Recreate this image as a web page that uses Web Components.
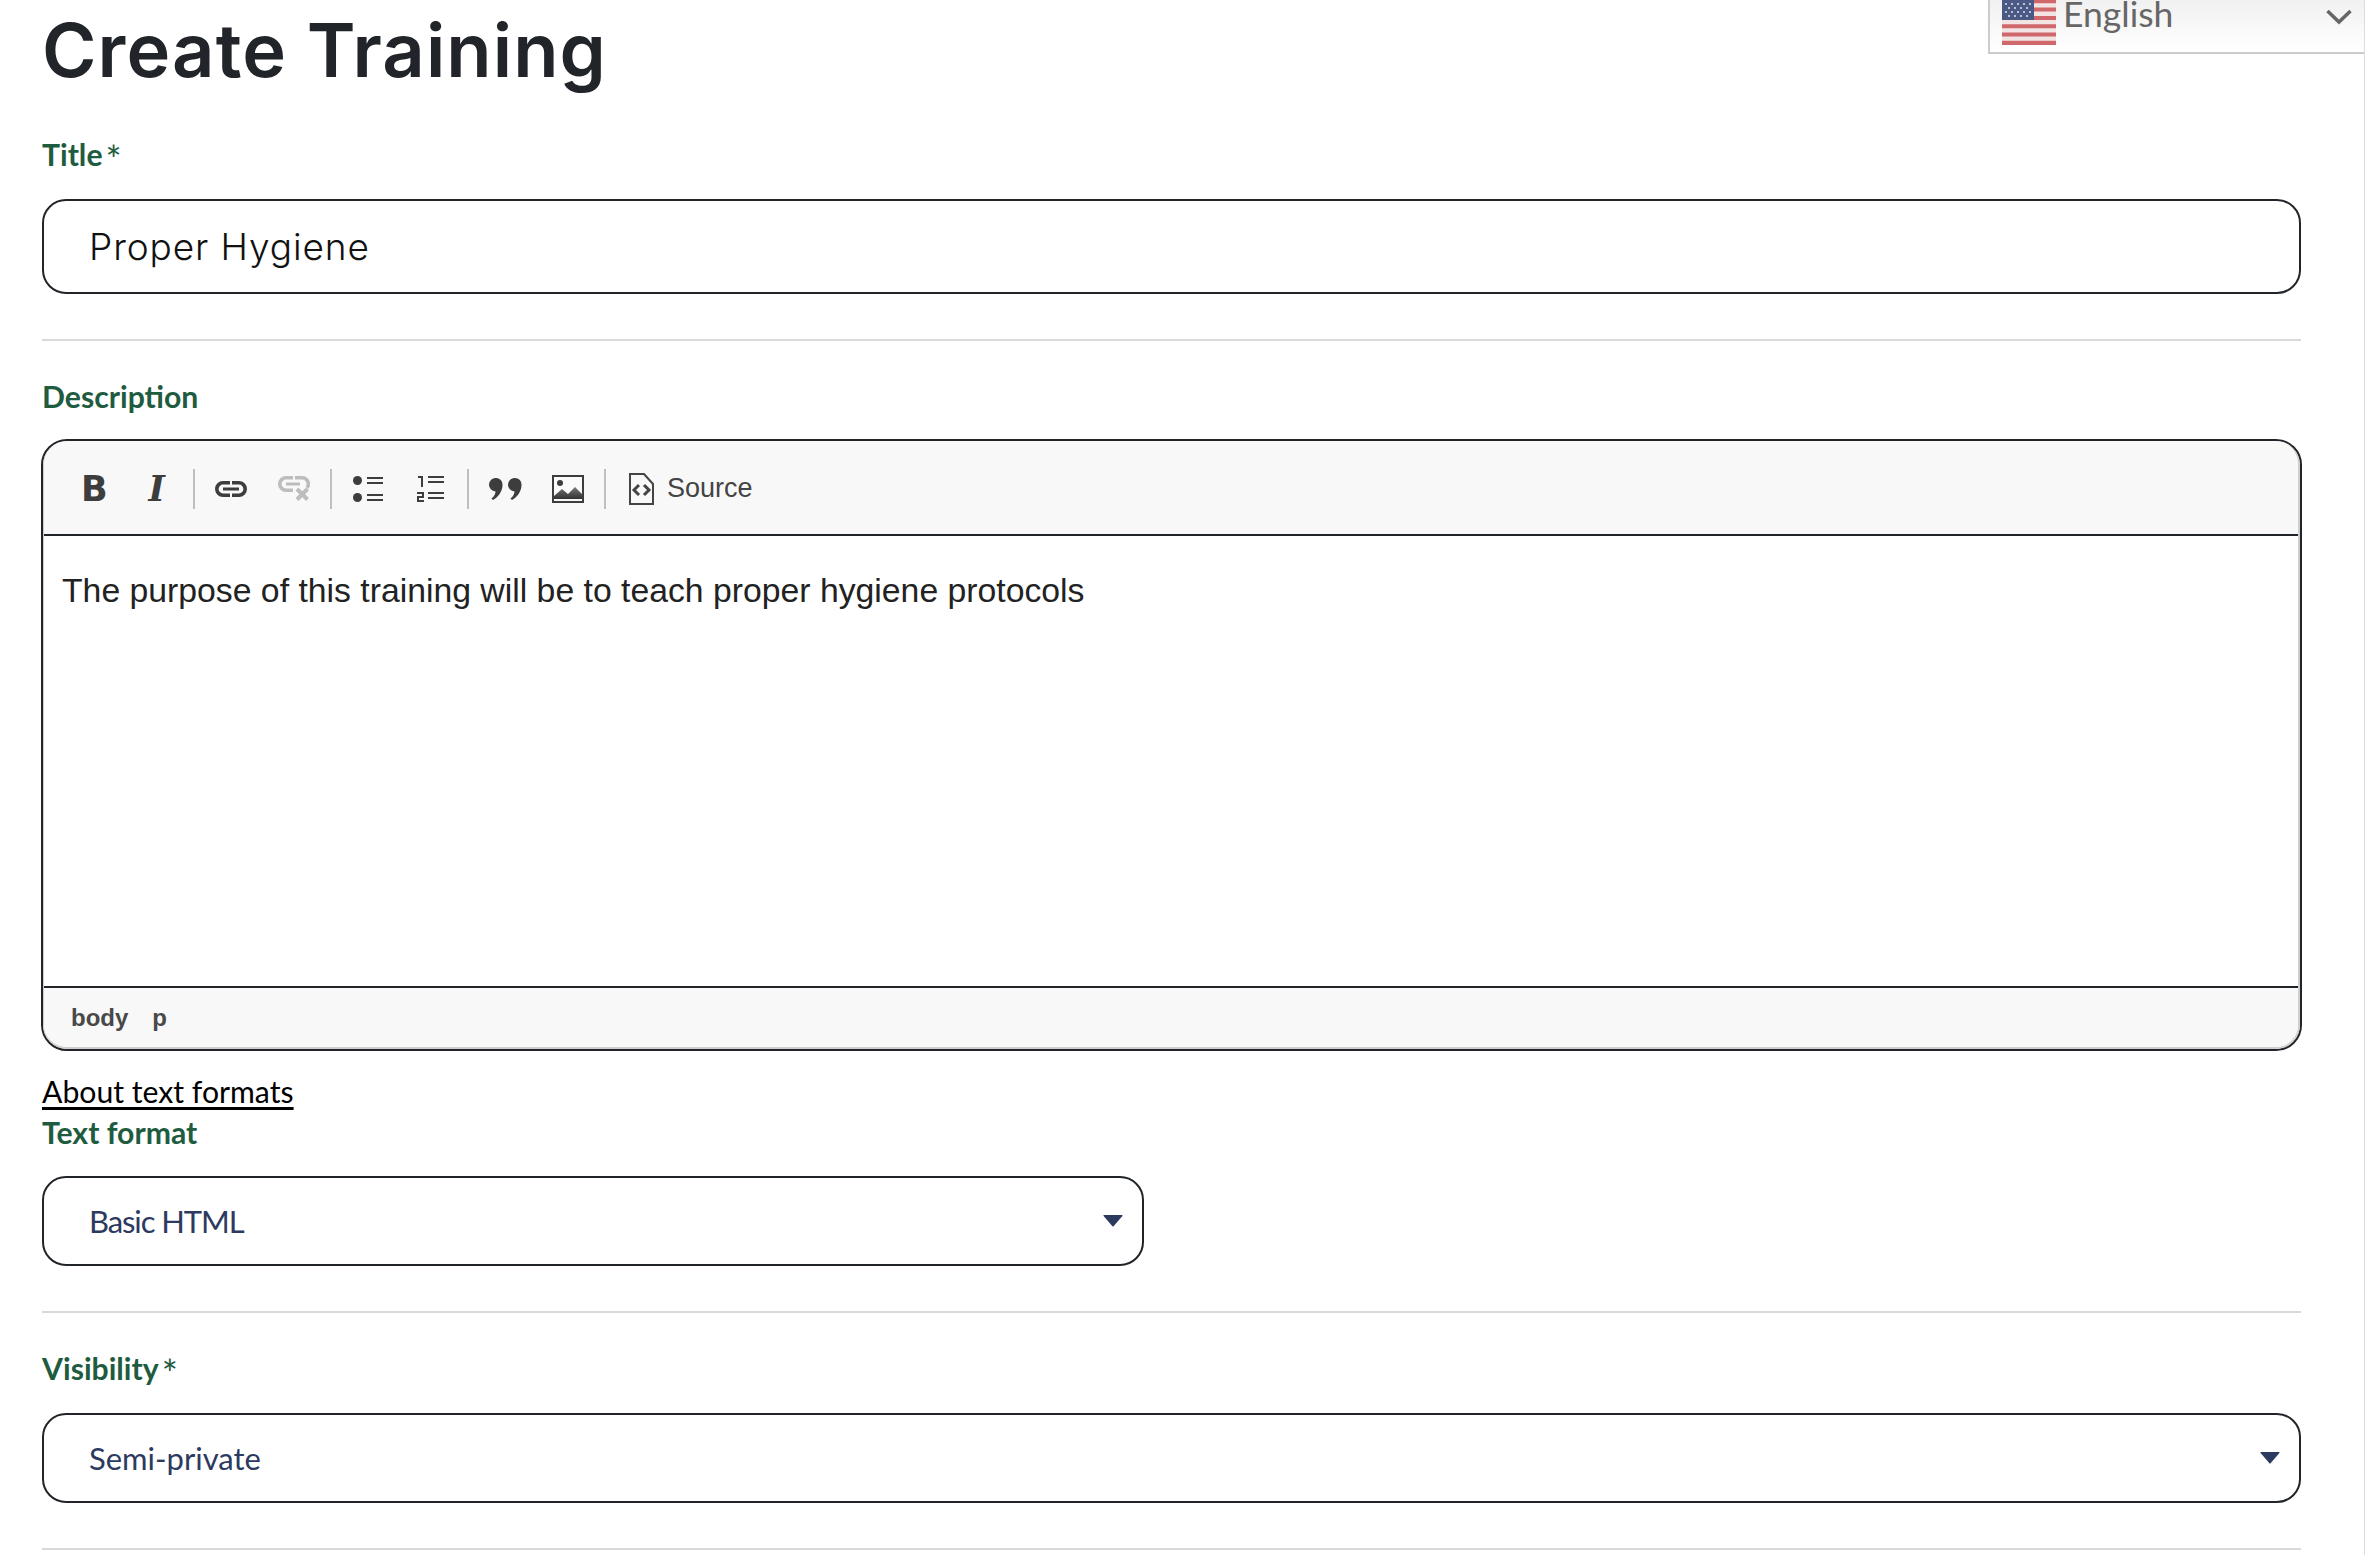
<!DOCTYPE html>
<html lang="en">
<head>
<meta charset="utf-8">
<title>Create Training</title>
<style>
  html, body { margin: 0; padding: 0; background: #fff; }
  body { height: 1555px; overflow: hidden; font-family: "Lato", "Liberation Sans", sans-serif; }
</style>
</head>
<body>
<training-page>
  <lang-switcher slot="overlay">English</lang-switcher>
  <page-title>Create Training</page-title>

  <form-label required style="margin-top:6px">Title</form-label>
  <text-box style="margin-top:25px">Proper Hygiene</text-box>
  <form-rule style="margin-bottom:35px"></form-rule>

  <form-label>Description</form-label>
  <rich-editor style="margin-top:23px">The purpose of this training will be to teach proper hygiene protocols</rich-editor>
  <format-link>About text formats</format-link>
  <form-label style="margin-top:1px">Text format</form-label>
  <select-box style="margin-top:24px;width:1102px;letter-spacing:-1.1px">Basic HTML</select-box>
  <form-rule style="margin-bottom:35px"></form-rule>

  <form-label required>Visibility</form-label>
  <select-box style="margin-top:25px">Semi-private</select-box>
  <form-rule></form-rule>
</training-page>

<script>
class TrainingPage extends HTMLElement {
  constructor() {
    super();
    this.attachShadow({ mode: 'open' }).innerHTML = `
      <style>
        :host { display: block; position: relative; height: 1555px; box-sizing: border-box; padding: 0 64px 0 42px; overflow: hidden; }
        .edge { position: absolute; top: 0; right: 0; bottom: 0; width: 1px; background: #ddd; }
      </style>
      <slot></slot>
      <slot name="overlay"></slot>
      <div class="edge"></div>
    `;
  }
}

class PageTitle extends HTMLElement {
  constructor() {
    super();
    this.attachShadow({ mode: 'open' }).innerHTML = `
      <style>
        :host { display: block; height: 128px; font: 600 74px/100px "Inter", "Liberation Sans", sans-serif; letter-spacing: 1.1px; color: #212529; }
      </style>
      <slot></slot>
    `;
  }
}

class FormLabel extends HTMLElement {
  constructor() {
    super();
    const star = this.hasAttribute('required') ? '<span class="star">*</span>' : '';
    this.attachShadow({ mode: 'open' }).innerHTML = `
      <style>
        :host { display: block; height: 40px; font: 700 30.2px/40px "Lato", "Liberation Sans", sans-serif; color: #1f5c3f; }
        .star { margin-left: 3px; font-size: 38px; font-weight: 400; line-height: 0; vertical-align: -8px; }
      </style>
      <slot></slot>${star}
    `;
  }
}

class TextBox extends HTMLElement {
  constructor() {
    super();
    this.attachShadow({ mode: 'open' }).innerHTML = `
      <style>
        :host { display: flex; align-items: center; box-sizing: border-box; height: 95px; padding: 0 45px; border: 2px solid #212529; border-radius: 24px; font: 300 37px "Inter", "Liberation Sans", sans-serif; letter-spacing: .9px; color: #111; }
      </style>
      <slot></slot>
    `;
  }
}

class SelectBox extends HTMLElement {
  constructor() {
    super();
    this.attachShadow({ mode: 'open' }).innerHTML = `
      <style>
        :host { display: flex; align-items: center; justify-content: space-between; box-sizing: border-box; height: 90px; padding: 0 19px 0 45px; border: 2px solid #212529; border-radius: 24px; font: 400 31px "Lato", "Liberation Sans", sans-serif; color: #2d3a5f; }
        svg { display: block; }
      </style>
      <span><slot></slot></span>
      <svg width="20" height="12" viewBox="0 0 20 12"><path d="M1 0h18q1 0 .4 1L10.8 11q-.8 1-1.6 0L.6 1Q0 0 1 0z" fill="#2d3a5f"/></svg>
    `;
  }
}

class FormRule extends HTMLElement {
  constructor() {
    super();
    this.attachShadow({ mode: 'open' }).innerHTML = `
      <style>
        :host { display: block; height: 2px; margin: 45px 0 36px; background: #d9d9d9; }
      </style>
    `;
  }
}

class FormatLink extends HTMLElement {
  constructor() {
    super();
    this.attachShadow({ mode: 'open' }).innerHTML = `
      <style>
        :host { display: block; height: 40px; margin-top: 20px; font: 400 30.2px/40px "Lato", "Liberation Sans", sans-serif; color: #000; }
        a { color: inherit; text-decoration: underline; text-decoration-thickness: 3px; text-underline-offset: 4px; }
      </style>
      <a href="#"><slot></slot></a>
    `;
  }
}

class ToolButton extends HTMLElement {
  constructor() {
    super();
    this.attachShadow({ mode: 'open' }).innerHTML = `
      <style>
        :host { display: flex; align-items: center; justify-content: center; flex: none; width: 62.5px; height: 62px; color: #3d3d3d; }
        :host([off]) { color: #bdbdbd; }
        :host([wide]) { width: auto; gap: 13px; padding-left: 18px; font: 400 27px "Liberation Sans", Arial, sans-serif; color: #444; }
      </style>
      <slot></slot>
    `;
  }
}

class ToolSep extends HTMLElement {
  constructor() {
    super();
    this.attachShadow({ mode: 'open' }).innerHTML = `
      <style>
        :host { display: block; flex: none; width: 2px; height: 40px; margin: 0 5px; background: #bfbfbf; }
      </style>
    `;
  }
}

class RichEditor extends HTMLElement {
  constructor() {
    super();
    this.attachShadow({ mode: 'open' }).innerHTML = `
      <style>
        :host { display: block; box-sizing: border-box; height: 612px; margin: 0 -1px; border: 2px solid #212529; border-radius: 26px; overflow: hidden; background: #fff; }
        .wrap { display: flex; flex-direction: column; box-sizing: border-box; height: 100%; border: solid #cfcfcf; border-width: 0 2px 2px 1px; border-radius: 24px; overflow: hidden; }
        .bar { display: flex; align-items: center; flex: none; box-sizing: border-box; height: 95px; padding: 2px 0 0 19px; background: #f8f8f8; border-bottom: 2px solid #212529; }
        .body { flex: 1; box-sizing: border-box; padding: 32px 18px; font: 400 33.75px/44px "Liberation Sans", Arial, sans-serif; color: #222; }
        .path { display: flex; align-items: center; gap: 24px; flex: none; box-sizing: border-box; height: 61px; padding-left: 27px; background: #f8f8f8; border-top: 2px solid #212529; font: 700 24px "Liberation Sans", Arial, sans-serif; color: #484848; }
        svg { display: block; }
        .b { font: 700 35px "DejaVu Sans", sans-serif; }
        .i { font: italic 700 35px "DejaVu Serif", serif; }
      </style>
      <div class="wrap">
      <div class="bar">
        <tool-button><span class="b">B</span></tool-button>
        <tool-button><span class="i">I</span></tool-button>
        <tool-sep></tool-sep>
        <tool-button>
          <svg width="32" height="16" viewBox="0 0 32 16" fill="none" stroke="currentColor" stroke-width="3.6"><path d="M15 1.800H8a6.200 6.200 0 0 0 0 12.400h7M17 1.800h7a6.200 6.200 0 0 1 0 12.400h-7"/><path d="M8 8h16" stroke-width="3"/></svg>
        </tool-button>
        <tool-button off>
          <svg width="32" height="25" viewBox="0 0 32 25" fill="none" stroke="currentColor" stroke-width="3.6"><path d="M15 1.800H8a6.200 6.200 0 0 0 0 12.400h7M17 1.800h7a6.200 6.200 0 0 1 5 10"/><path d="M8 8h14" stroke-width="3"/><path d="M19 13l10.500 10.500M29.500 13L19 23.500" stroke-width="4"/></svg>
        </tool-button>
        <tool-sep></tool-sep>
        <tool-button>
          <svg width="30" height="26" viewBox="0 0 30 26" fill="currentColor"><circle cx="4.500" cy="4.500" r="4.500"/><circle cx="4.500" cy="21.500" r="4.500"/><path d="M14 1h16v2H14zM14 6h16v2H14zM14 18h16v2H14zM14 23h16v2H14z"/></svg>
        </tool-button>
        <tool-button>
          <svg width="27" height="28" viewBox="0 0 27 28" fill="none" stroke="currentColor" stroke-width="2"><path d="M1 2h4v10M0 18h6v4H1v4h6"/><path d="M11 2h16M11 7h16M11 18h16M11 23h16"/></svg>
        </tool-button>
        <tool-sep></tool-sep>
        <tool-button>
          <svg width="33" height="22" viewBox="0 0 33 22" fill="currentColor"><path d="M7 0a6.500 6.500 0 0 1 6.500 7c0 6-4 12-9.500 15l-1.500-1.500c3-2.500 4-5 4-7A6.500 6.500 0 0 1 7 0zM26 0a6.500 6.500 0 0 1 6.500 7c0 6-4 12-9.500 15l-1.500-1.500c3-2.500 4-5 4-7A6.500 6.500 0 0 1 26 0z"/></svg>
        </tool-button>
        <tool-button>
          <svg width="32" height="28" viewBox="0 0 32 28">
            <defs><linearGradient id="hill" x1="0" y1="0" x2="0" y2="1"><stop offset="0" stop-color="#777"/><stop offset="1" stop-color="#333"/></linearGradient></defs>
            <rect x="1" y="1" width="30" height="26" fill="#fafafa" stroke="#3d3d3d" stroke-width="2"/>
            <circle cx="8" cy="8" r="3" fill="#3d3d3d"/>
            <path d="M2 21l8-7 6 5 7-7 7 7v5H2z" fill="url(#hill)"/>
          </svg>
        </tool-button>
        <tool-sep></tool-sep>
        <tool-button wide>
          <svg width="25" height="32" viewBox="0 0 25 32" fill="none" stroke="#444" stroke-width="2"><path d="M1 1h14l9 10v20H1z"/><path d="M10 12l-5 5 5 5M15 12l5 5-5 5" stroke-width="3"/></svg>
          <span>Source</span>
        </tool-button>
      </div>
      <div class="body"><slot></slot></div>
      <div class="path"><span>body</span><span>p</span></div>
      </div>
    `;
  }
}

class LangSwitcher extends HTMLElement {
  constructor() {
    super();
    this.attachShadow({ mode: 'open' }).innerHTML = `
      <style>
        :host { position: absolute; top: 0; left: 1988px; right: 0; height: 54px; box-sizing: border-box; border: solid #ccc; border-width: 0 0 2px 2px; background: linear-gradient(#f1f1f1, #fff); font: 400 35.5px/1 "Lato", "Liberation Sans", sans-serif; color: #666; overflow: hidden; }
        .flag { position: absolute; left: 12px; bottom: 7px; }
        .name { position: absolute; left: 73px; top: -8px; line-height: 44px; }
        .chev { position: absolute; right: 13px; top: 9px; }
      </style>
      <svg class="flag" width="54" height="54" viewBox="0 0 54 54">
        <rect width="54" height="54" fill="#f3e4e4"/>
        <path d="M0 0h54v4H0zM0 8.300h54v4H0zM0 16.600h54v4H0zM0 24.900h54v4H0zM0 33.200h54v4H0zM0 41.500h54v4H0zM0 49.800h54v4.200H0z" fill="#cf676b"/>
        <rect width="32" height="29" fill="#4a5a85"/>
        <g fill="#dfe3ee">
          <circle cx="4" cy="13" r="1"/><circle cx="10" cy="13" r="1"/><circle cx="16" cy="13" r="1"/><circle cx="22" cy="13" r="1"/><circle cx="28" cy="13" r="1"/>
          <circle cx="7" cy="17" r="1"/><circle cx="13" cy="17" r="1"/><circle cx="19" cy="17" r="1"/><circle cx="25" cy="17" r="1"/>
          <circle cx="4" cy="21" r="1"/><circle cx="10" cy="21" r="1"/><circle cx="16" cy="21" r="1"/><circle cx="22" cy="21" r="1"/><circle cx="28" cy="21" r="1"/>
          <circle cx="7" cy="25" r="1"/><circle cx="13" cy="25" r="1"/><circle cx="19" cy="25" r="1"/><circle cx="25" cy="25" r="1"/>
        </g>
      </svg>
      <span class="name"><slot></slot></span>
      <svg class="chev" width="26" height="16" viewBox="0 0 26 16" fill="none" stroke="#666" stroke-width="3.5"><path d="M1.500 2L13 13 24.500 2"/></svg>
    `;
  }
}

customElements.define('training-page', TrainingPage);
customElements.define('page-title', PageTitle);
customElements.define('form-label', FormLabel);
customElements.define('text-box', TextBox);
customElements.define('select-box', SelectBox);
customElements.define('form-rule', FormRule);
customElements.define('format-link', FormatLink);
customElements.define('tool-button', ToolButton);
customElements.define('tool-sep', ToolSep);
customElements.define('rich-editor', RichEditor);
customElements.define('lang-switcher', LangSwitcher);
</script>
</body>
</html>
